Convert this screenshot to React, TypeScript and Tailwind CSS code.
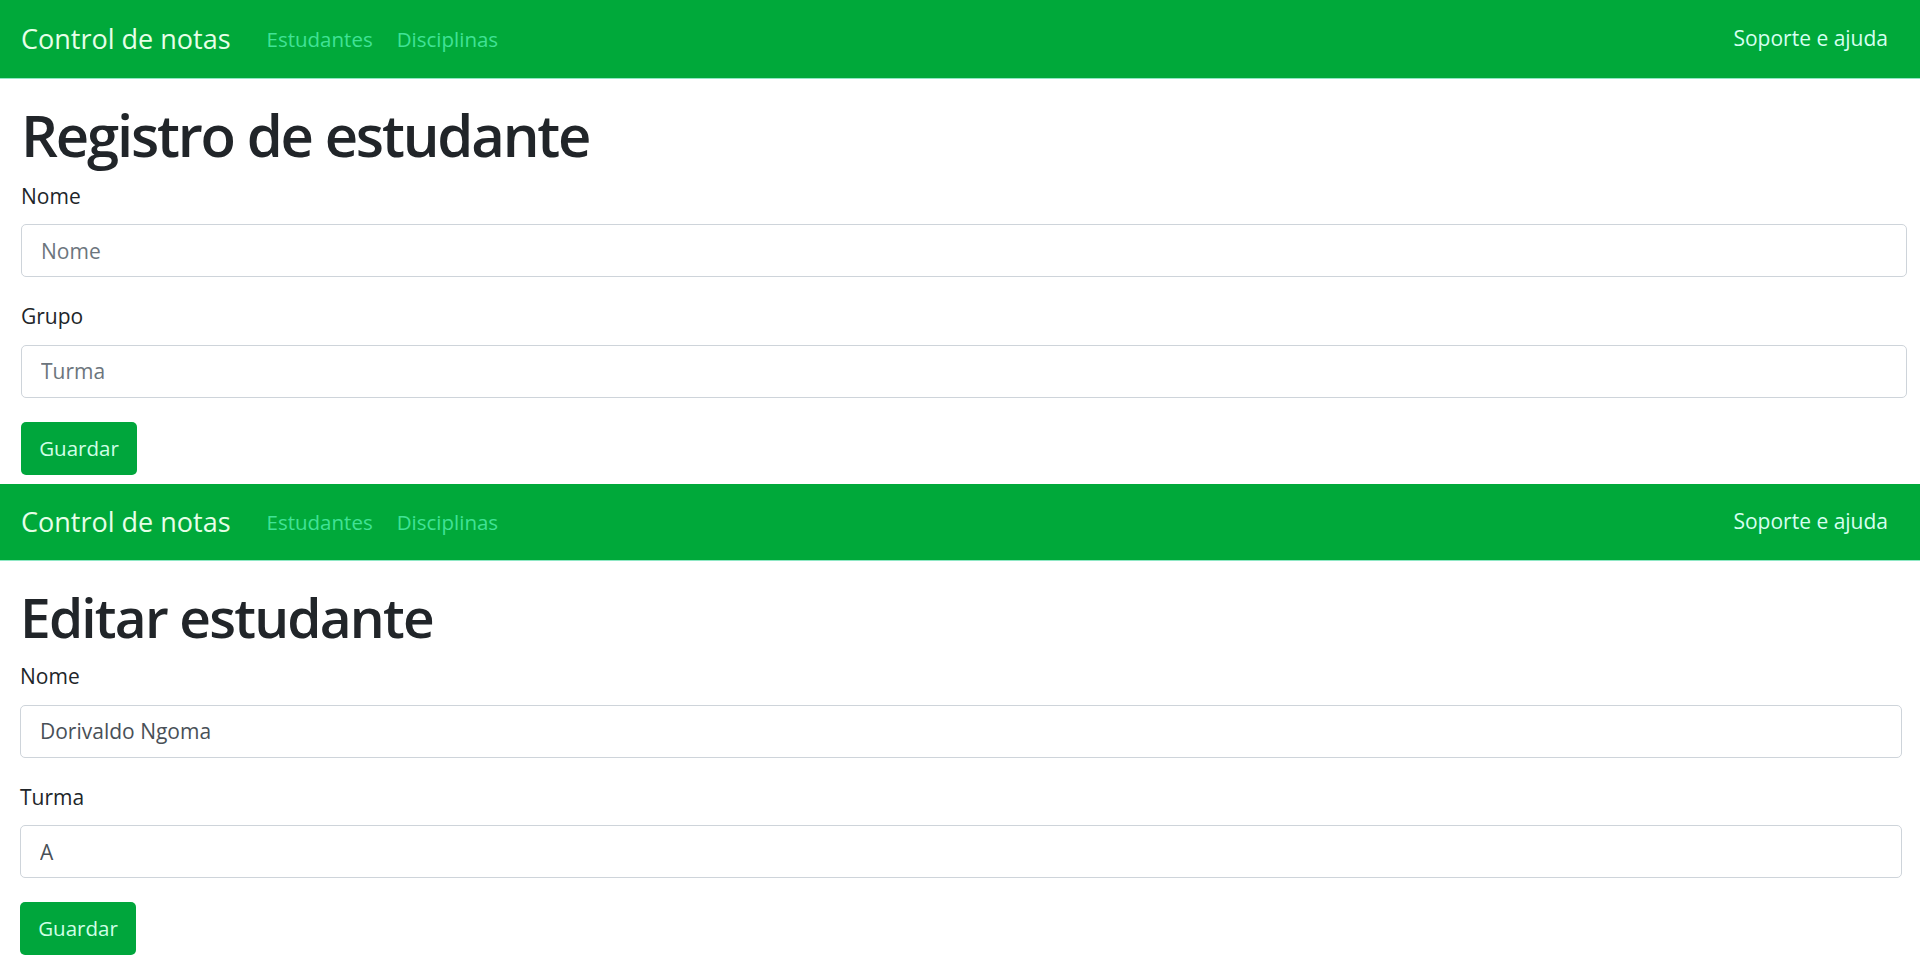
type Field = { label: string; placeholder?: string; value?: string }

function Navbar({ height }: { height: string }) {
  return (
    <nav
      className={`flex ${height} items-center justify-between border-b border-[#8fe8c4] bg-[#00a93a] pl-[21px] pr-[32px]`}
    >
      <div className="flex items-center">
        <a className="text-[27px] text-[#e6ffe8]">Control de notas</a>
        <div className="ml-[36px] flex items-center gap-[24px] text-[20.5px] text-[#40e296]">
          <a>Estudantes</a>
          <a>Disciplinas</a>
        </div>
      </div>
      <a className="text-[21px] text-[#d6fff0]">Soporte e ajuda</a>
    </nav>
  )
}

function FormGroup({ label, placeholder, value }: Field) {
  return (
    <div className="mb-[24px]">
      <label className="mb-[12px] block text-[21px] leading-[1.5]">{label}</label>
      <input
        readOnly
        placeholder={placeholder}
        defaultValue={value}
        className="block h-[53px] w-full rounded-[5px] border border-[#ced4da] bg-white px-[19px] text-[21px] text-[#495057] outline-none placeholder:text-[#6c757d]"
      />
    </div>
  )
}

function SaveButton() {
  return (
    <button className="h-[53px] w-[116px] rounded-[5px] bg-[#00a63c] text-[20.5px] text-[#d0ffe6]">
      Guardar
    </button>
  )
}

const registerFields: Field[] = [
  { label: 'Nome', placeholder: 'Nome' },
  { label: 'Grupo', placeholder: 'Turma' },
]

const editFields: Field[] = [
  { label: 'Nome', value: 'Dorivaldo Ngoma' },
  { label: 'Turma', value: 'A' },
]

export default function App() {
  return (
    <div className="min-h-screen bg-white font-['Open_Sans',sans-serif] text-[#212529]">
      <Navbar height="h-[79px]" />
      <main className="pl-[21px] pr-[13px] pb-[9px]">
        <h1 className="mt-[20px] mb-[10px] text-[58px] leading-[1.24] font-semibold tracking-[-2.2px]">
          Registro de estudante
        </h1>
        {registerFields.map((f) => (
          <FormGroup key={f.label} {...f} />
        ))}
        <SaveButton />
      </main>

      <Navbar height="h-[77px]" />
      <main className="pl-[20px] pr-[18px]">
        <h1 className="mt-[22px] mb-[10px] text-[55px] leading-[1.24] font-semibold tracking-[-1.8px]">
          Editar estudante
        </h1>
        {editFields.map((f) => (
          <FormGroup key={f.label} {...f} />
        ))}
        <SaveButton />
      </main>
    </div>
  )
}
